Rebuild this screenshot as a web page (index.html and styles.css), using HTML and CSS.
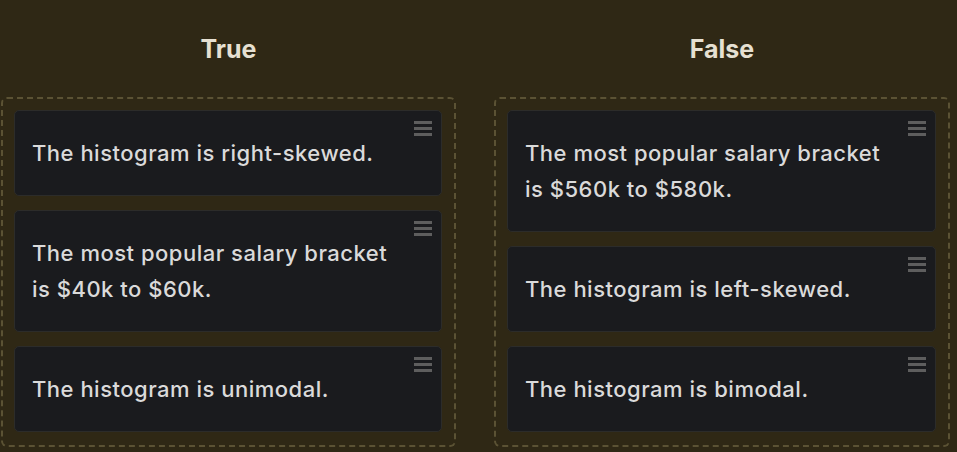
FILE: index.html
```html
<!DOCTYPE html>
<html>
<head>
<meta charset="utf-8">
<link rel="stylesheet" href="styles.css">
</head>
<body>
<div class="board">
  <section class="column">
    <h2 class="title">True</h2>
    <div class="zone">
      <div class="card"><p>The histogram is right-skewed.</p><span class="grip"><i></i><i></i><i></i></span></div>
      <div class="card"><p>The most popular salary bracket is $40k to $60k.</p><span class="grip"><i></i><i></i><i></i></span></div>
      <div class="card"><p>The histogram is unimodal.</p><span class="grip"><i></i><i></i><i></i></span></div>
    </div>
  </section>
  <section class="column">
    <h2 class="title">False</h2>
    <div class="zone">
      <div class="card"><p>The most popular salary bracket is $560k to $580k.</p><span class="grip"><i></i><i></i><i></i></span></div>
      <div class="card"><p>The histogram is left-skewed.</p><span class="grip"><i></i><i></i><i></i></span></div>
      <div class="card"><p>The histogram is bimodal.</p><span class="grip"><i></i><i></i><i></i></span></div>
    </div>
  </section>
</div>
</body>
</html>
```

FILE: styles.css
```css
html, body {
  margin: 0;
  height: 100%;
  background: #2f2815;
}
body {
  font-family: "Inter", "Liberation Sans", sans-serif;
  color: #dadada;
}
.board {
  display: grid;
  grid-template-columns: 455px 456px;
  column-gap: 38px;
  padding: 0 7px 0 1px;
  align-items: start;
}
.column {
  display: flex;
  flex-direction: column;
}
.title {
  margin: 0;
  height: 97px;
  box-sizing: border-box;
  padding-top: 32px;
  text-align: center;
  font-size: 25px;
  line-height: 34px;
  font-weight: 700;
  color: #e6e0d2;
}
.zone {
  border: 2px dashed #5b5234;
  border-radius: 6px;
  padding: 11px 12px 13px 11px;
  display: flex;
  flex-direction: column;
  gap: 14px;
}
.card {
  position: relative;
  background: #1a1b1e;
  border: 1px solid #2c2c2a;
  border-radius: 5px;
  padding: 24px 45px 24px 17px;
}
.card p {
  margin: 0;
  font-size: 22px;
  line-height: 36px;
  font-weight: 500;
  letter-spacing: 0.5px;
}
.grip {
  position: absolute;
  top: 10px;
  right: 9px;
  width: 18px;
  display: flex;
  flex-direction: column;
  gap: 3px;
}
.grip i {
  display: block;
  height: 3px;
  background: #5e5e5e;
}
```
